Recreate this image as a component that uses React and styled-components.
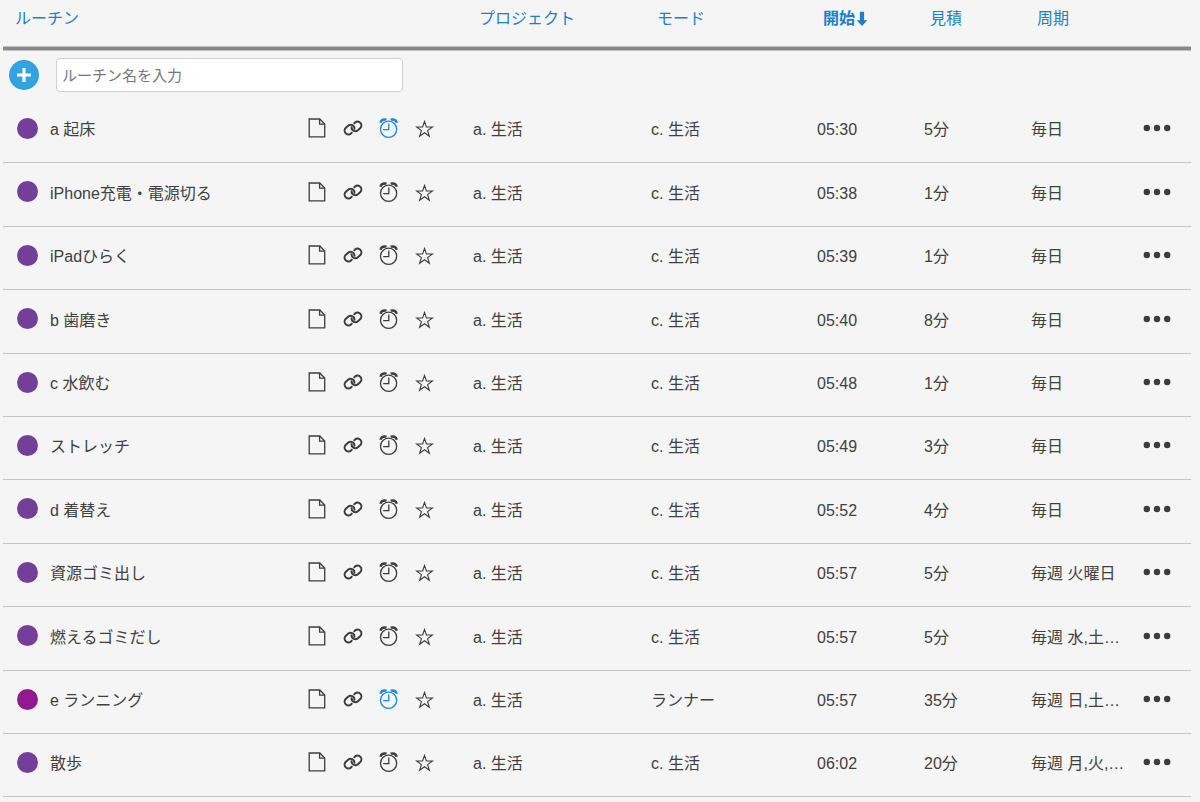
import React from "react";
import styled, { createGlobalStyle, css } from "styled-components";

const Global = createGlobalStyle`
  * { box-sizing: border-box; }
  body {
    margin: 0;
    background: #f5f5f5;
    color: #404040;
    font: 16px/24px "Liberation Sans", "Noto Sans CJK JP", sans-serif;
  }
  button, input { font: inherit; color: inherit; }
`;

const Page = styled.main`
  padding: 0 9px 0 3px;
`;

const Table = styled.table`
  width: 100%;
  table-layout: fixed;
  border-collapse: separate;
  border-spacing: 0;
`;

const Col = styled.col`
  width: ${(p) => (p.$w ? `${p.$w}px` : "auto")};
`;

const HeadCell = styled.th`
  height: 50px;
  padding: 7px 0 0 ${(p) => (p.$first ? 12 : 6)}px;
  vertical-align: top;
  text-align: left;
  font-weight: 400;
  border-bottom: 3px solid #888;
  box-shadow: inset 0 -1px #c0c0c0, 0 1px #c0c0c0;
`;

const SortButton = styled.button`
  display: inline-flex;
  align-items: center;
  padding: 0;
  border: 0;
  background: none;
  color: #1a80cc;
  white-space: nowrap;
  cursor: pointer;
  font-weight: ${(p) => (p.$active ? 700 : 400)};
`;

const AddCell = styled.td`
  height: 50px;
  padding: 0 0 0 6px;
`;

const AddForm = styled.form`
  display: flex;
  align-items: center;
  gap: 17px;
`;

const AddButton = styled.button`
  display: grid;
  place-items: center;
  flex: none;
  width: 30px;
  height: 30px;
  padding: 0;
  border: 0;
  border-radius: 50%;
  background: #32a3e1;
  color: #fff;
  cursor: pointer;
`;

const NameInput = styled.input`
  width: 347px;
  height: 34px;
  padding: 0 5px;
  border: 1px solid #d0d0d0;
  border-radius: 4px;
  background: #fff;
  font-size: 15px;
  &::placeholder { color: #777; opacity: 1; }
`;

const Row = styled.tr`
  height: 63px;
  &:nth-child(5n + 2), &:nth-child(5n + 4) { height: 64px; }
`;

const Cell = styled.td`
  padding: 0 0 2px;
  vertical-align: middle;
  border-bottom: 1px solid #c4c4c4;
  white-space: nowrap;
  ${(p) => p.$clip && css`
    padding-right: 8px;
    overflow: hidden;
    text-overflow: ellipsis;
  `}
  ${(p) => p.$icons && css`padding-bottom: 6px;`}
`;

const Name = styled.div`
  display: flex;
  align-items: center;
  gap: 12px;
  padding-left: 14px;
`;

const Dot = styled.span`
  width: 21px;
  height: 21px;
  margin-bottom: 4px;
  border-radius: 50%;
  background: ${(p) => p.$color};
`;

const Icons = styled.div`
  display: flex;
  gap: 12px;
`;

const IconButton = styled.button`
  display: grid;
  place-items: center;
  width: ${(p) => (p.$wide ? 32 : 24)}px;
  height: 24px;
  padding: 0;
  border: 0;
  background: none;
  color: ${(p) => (p.$on ? "#1a88d8" : "#3c3c3c")};
  cursor: pointer;
`;

const Svg = styled.svg`
  display: block;
  fill: none;
  stroke: currentColor;
`;

const FileIcon = () => (
  <Svg width="20" height="22" viewBox="0 0 20 22" strokeWidth="1.3">
    <path d="M2.2 2h10.6l4.9 5v12.9H2.2z" />
    <path d="M12.6 2v5.1h5" />
  </Svg>
);

const LinkIcon = () => (
  <Svg width="22" height="20" viewBox="-11 -10 22 20" strokeWidth="2" strokeLinecap="round">
    <g transform="translate(-3.7 1.8) rotate(-42)">
      <path d="M-.2 3.8H-1.2A3.8 3.8 0 0 1 -1.2 -3.8H1.8A3.8 3.8 0 0 1 4.6 2.6" />
    </g>
    <g transform="rotate(180) translate(-3.7 1.8) rotate(-42)">
      <path d="M-.2 3.8H-1.2A3.8 3.8 0 0 1 -1.2 -3.8H1.8A3.8 3.8 0 0 1 4.6 2.6" />
    </g>
  </Svg>
);

const AlarmIcon = () => (
  <Svg width="22" height="22" viewBox="0 0 22 22" strokeWidth="1.3">
    <circle cx="10.6" cy="12.2" r="8.1" />
    <path d="M10.8 6.6v6H5.2" />
    <path d="M2.4 5.8C3.1 3.4 5.4 2 8.6 2.7M18.8 5.8C18.1 3.4 15.8 2 12.6 2.7" strokeWidth="2.3" />
  </Svg>
);

const StarIcon = () => (
  <Svg width="20" height="20" viewBox="0 0 20 20" strokeWidth="1.1">
    <path d="M9.5 3.4l1.9 5.6h6l-4.8 3.6 1.8 5.7-4.9-3.5-4.9 3.5 1.8-5.7L1.6 9h6z" />
  </Svg>
);

const MoreIcon = () => (
  <Svg width="30" height="8" viewBox="0 0 30 8">
    <g fill="currentColor" stroke="none">
      <circle cx="4.8" cy="4" r="3.2" />
      <circle cx="15" cy="4" r="3.2" />
      <circle cx="25.2" cy="4" r="3.2" />
    </g>
  </Svg>
);

const PlusIcon = () => (
  <Svg width="16" height="16" viewBox="0 0 16 16" strokeWidth="3.2">
    <path d="M8 1v14M1 8h14" />
  </Svg>
);

const ArrowIcon = () => (
  <Svg width="13" height="16" viewBox="0 0 13 16">
    <path d="M4.9 .8h4.2v8.4h3.2L7 15 1.7 9.2h3.2z" fill="currentColor" stroke="none" />
  </Svg>
);

const columns = ["プロジェクト", "モード", "開始", "見積", "周期"];

const routines = [
  { name: "a 起床", start: "05:30", time: "5分", cycle: "毎日", alarm: true },
  { name: "iPhone充電・電源切る", start: "05:38", time: "1分", cycle: "毎日" },
  { name: "iPadひらく", start: "05:39", time: "1分", cycle: "毎日" },
  { name: "b 歯磨き", start: "05:40", time: "8分", cycle: "毎日" },
  { name: "c 水飲む", start: "05:48", time: "1分", cycle: "毎日" },
  { name: "ストレッチ", start: "05:49", time: "3分", cycle: "毎日" },
  { name: "d 着替え", start: "05:52", time: "4分", cycle: "毎日" },
  { name: "資源ゴミ出し", start: "05:57", time: "5分", cycle: "毎週 火曜日" },
  { name: "燃えるゴミだし", start: "05:57", time: "5分", cycle: "毎週 水,土…" },
  { name: "e ランニング", start: "05:57", time: "35分", cycle: "毎週 日,土…", mode: "ランナー", color: "#911991", alarm: true },
  { name: "散歩", start: "06:02", time: "20分", cycle: "毎週 月,火,…" },
];

function RoutineRow({ item }) {
  return (
    <Row>
      <Cell>
        <Name><Dot $color={item.color || "#733f98"} />{item.name}</Name>
      </Cell>
      <Cell $icons>
        <Icons>
          <IconButton type="button" aria-label="メモ"><FileIcon /></IconButton>
          <IconButton type="button" aria-label="リンク"><LinkIcon /></IconButton>
          <IconButton type="button" aria-label="アラーム" $on={item.alarm}><AlarmIcon /></IconButton>
          <IconButton type="button" aria-label="お気に入り"><StarIcon /></IconButton>
        </Icons>
      </Cell>
      <Cell>a. 生活</Cell>
      <Cell>{item.mode || "c. 生活"}</Cell>
      <Cell>{item.start}</Cell>
      <Cell>{item.time}</Cell>
      <Cell $clip>{item.cycle}</Cell>
      <Cell $icons>
        <IconButton type="button" aria-label="メニュー" $wide><MoreIcon /></IconButton>
      </Cell>
    </Row>
  );
}

export default function App() {
  return (
    <Page>
      <Global />
      <Table>
        <colgroup>
          <Col />
          <Col $w={168} />
          <Col $w={178} />
          <Col $w={166} />
          <Col $w={107} />
          <Col $w={107} />
          <Col $w={110} />
          <Col $w={50} />
        </colgroup>
        <thead>
          <tr>
            <HeadCell colSpan={2} $first><SortButton type="button">ルーチン</SortButton></HeadCell>
            {columns.map((c) => (
              <HeadCell key={c} colSpan={c === "周期" ? 2 : 1} aria-sort={c === "開始" ? "ascending" : undefined}>
                <SortButton type="button" $active={c === "開始"}>
                  {c}
                  {c === "開始" && <ArrowIcon />}
                </SortButton>
              </HeadCell>
            ))}
          </tr>
          <tr>
            <AddCell colSpan={8}>
              <AddForm onSubmit={(e) => e.preventDefault()}>
                <AddButton aria-label="追加"><PlusIcon /></AddButton>
                <NameInput type="text" aria-label="ルーチン名" placeholder="ルーチン名を入力" />
              </AddForm>
            </AddCell>
          </tr>
        </thead>
        <tbody>
          {routines.map((item) => <RoutineRow key={item.name} item={item} />)}
        </tbody>
      </Table>
    </Page>
  );
}
